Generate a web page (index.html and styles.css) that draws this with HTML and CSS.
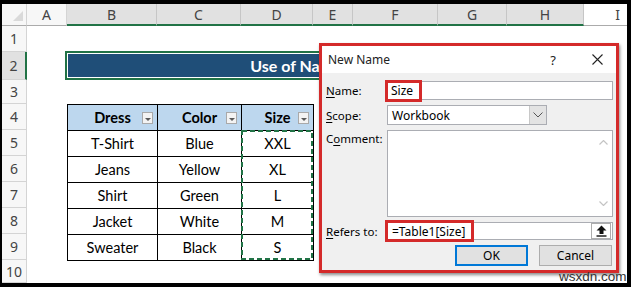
FILE: index.html
```html
<!DOCTYPE html>
<html>
<head>
<meta charset="utf-8">
<link rel="stylesheet" href="styles.css">
</head>
<body>
<div class="frame">
  <div class="sheet">
    <div class="corner"></div>
    <div class="ch">A</div>
    <div class="ch sel">B</div>
    <div class="ch sel">C</div>
    <div class="ch sel">D</div>
    <div class="ch sel">E</div>
    <div class="ch sel">F</div>
    <div class="ch sel">G</div>
    <div class="ch sel">H</div>
    <div class="ch last">I</div>

    <div class="rh">1</div>
    <div class="rh sel">2</div>
    <div class="rh">3</div>
    <div class="rh">4</div>
    <div class="rh">5</div>
    <div class="rh">6</div>
    <div class="rh">7</div>
    <div class="rh">8</div>
    <div class="rh">9</div>
    <div class="rh">10</div>

    <div class="title"><span class="title-txt">Use of Named Range</span></div>

    <table class="tbl">
      <colgroup><col class="c1"><col class="c2"><col class="c3"></colgroup>
      <tr>
        <th><div class="hcell"><span class="htxt">Dress</span><span class="dd"></span></div></th>
        <th><div class="hcell"><span class="htxt">Color</span><span class="dd"></span></div></th>
        <th><div class="hcell"><span class="htxt">Size</span><span class="dd"></span></div></th>
      </tr>
      <tr><td>T-Shirt</td><td>Blue</td><td>XXL</td></tr>
      <tr><td>Jeans</td><td>Yellow</td><td>XL</td></tr>
      <tr><td>Shirt</td><td>Green</td><td>L</td></tr>
      <tr><td>Jacket</td><td>White</td><td>M</td></tr>
      <tr><td>Sweater</td><td>Black</td><td>S</td></tr>
    </table>

    <div class="ants">
      <svg width="72" height="130" viewBox="0 0 72 130"><rect x="1" y="1" width="70" height="128" fill="none" stroke="#217346" stroke-width="2" stroke-dasharray="5 3"/></svg>
    </div>

    <div class="dlg">
      <div class="dlg-title">
        <span class="dlg-name">New Name</span>
        <span class="dlg-help">?</span>
        <span class="dlg-close">
          <svg width="11" height="11" viewBox="0 0 11 11"><path d="M0.5 0.5 L10.5 10.5 M10.5 0.5 L0.5 10.5" stroke="#222" stroke-width="1.1" fill="none"/></svg>
        </span>
      </div>
      <div class="dlg-body">
        <div class="lbl"><span><u>N</u>ame:</span></div>
        <div class="field name-field"><span class="mark">Size</span></div>

        <div class="lbl"><span><u>S</u>cope:</span></div>
        <div class="select">
          <span class="sel-txt">Workbook</span>
          <span class="sel-btn"><svg width="10" height="6" viewBox="0 0 10 6"><path d="M0.5 0.5 L5 5 L9.5 0.5" stroke="#555" stroke-width="1" fill="none"/></svg></span>
        </div>

        <div class="lbl lbl-top"><span>C<u>o</u>mment:</span></div>
        <div class="textarea">
          <div class="ta-space"></div>
          <div class="ta-scroll">
            <svg width="9" height="5" viewBox="0 0 9 5"><path d="M0.5 4.5 L4.5 0.5 L8.5 4.5" stroke="#c4c4c4" stroke-width="1.2" fill="none"/></svg>
            <svg width="9" height="5" viewBox="0 0 9 5"><path d="M0.5 0.5 L4.5 4.5 L8.5 0.5" stroke="#c4c4c4" stroke-width="1.2" fill="none"/></svg>
          </div>
        </div>

        <div class="lbl"><span><u>R</u>efers to:</span></div>
        <div class="field refers-field">
          <span class="mark mark-wide">=Table1[Size]</span>
          <span class="grow"></span>
          <span class="up-btn"><svg width="11" height="12" viewBox="0 0 11 12"><path d="M5.5 0.5 L10.5 5.5 L7.5 5.5 L7.5 9 L3.5 9 L3.5 5.5 L0.5 5.5 Z" fill="#111"/><rect x="0.5" y="10.3" width="10" height="1.4" fill="#111"/></svg></span>
        </div>

        <div class="buttons">
          <div class="btn btn-default">OK</div>
          <div class="btn">Cancel</div>
        </div>
      </div>
    </div>

    <div class="wm">wsxdn.com</div>
  </div>
</div>
</body>
</html>
```

FILE: styles.css
```css
* { box-sizing: border-box; }
html, body { margin: 0; padding: 0; background: #000; }

.frame {
  width: 631px;
  height: 287px;
  background: #000;
  padding: 4px 4px 4px 2px;
}

.sheet {
  position: relative;
  width: 625px;
  height: 279px;
  background: #fff;
  overflow: hidden;
  display: grid;
  grid-template-columns: 25px 40px 90px 84px 72px 40px 85px 69px 77px 1fr;
  grid-template-rows: 22px 26px 28px 24px repeat(6, 26px) 1fr;
  font-family: Lato, "Liberation Sans", sans-serif;
}

.corner {
  position: relative;
  background: #f7f7f7;
  border-right: 1px solid #d4d4d4;
  border-bottom: 1px solid #ababab;
}
.corner::after {
  content: "";
  position: absolute;
  right: 3px;
  bottom: 4px;
  width: 10px;
  height: 10px;
  background: #dadada;
  clip-path: polygon(100% 0, 100% 100%, 0 100%);
}

.ch {
  display: flex;
  align-items: center;
  justify-content: center;
  background: #f7f7f7;
  border-right: 1px solid #d4d4d4;
  border-bottom: 1px solid #ababab;
  font: 14px "Noto Sans", sans-serif;
  color: #444;
}
.ch.sel {
  background: #e1e1e1;
  border-right-color: #c6c6c6;
  border-bottom: 2px solid #217346;
}
.ch.last { background: #fff; border-right: none; justify-content: flex-end; padding-right: 7px; }

.rh {
  grid-column: 1;
  display: flex;
  align-items: center;
  justify-content: center;
  background: #f7f7f7;
  border-right: 1px solid #d4d4d4;
  border-bottom: 1px solid #d4d4d4;
  font: 14px "Noto Sans", sans-serif;
  color: #444;
}
.rh.sel {
  background: #e1e1e1;
  border-right: 2px solid #217346;
}

.title {
  grid-column: 3 / 10;
  grid-row: 3;
  margin: -1px 0 0 -2px;
  border: 2px solid #217346;
  box-shadow: inset 0 0 0 1px #fff;
  background: #1f4e78;
  color: #fff;
  font-weight: bold;
  font-size: 16px;
  display: flex;
  align-items: center;
  justify-content: center;
}

.tbl {
  grid-column: 3 / 6;
  grid-row: 5 / 11;
  border-collapse: collapse;
  table-layout: fixed;
  width: 246px;
  height: 156px;
}
.tbl .c1 { width: 90px; }
.tbl .c2 { width: 84px; }
.tbl .c3 { width: 72px; }
.tbl th, .tbl td {
  border: 1px solid #000;
  padding: 0;
  height: 26px;
  text-align: center;
  font-size: 14.5px;
  color: #000;
}
.tbl th { background: #bdd7ee; font-weight: bold; }

.hcell {
  display: grid;
  grid-template-columns: 1fr auto 1fr;
  align-items: center;
}
.htxt { grid-column: 2; }
.dd {
  grid-column: 3;
  justify-self: end;
  margin-right: 4px;
  width: 11px;
  height: 12px;
  background: #f3f3f3;
  border: 1px solid #a9a9a9;
  position: relative;
}
.dd::after {
  content: "";
  position: absolute;
  left: 2px;
  top: 5px;
  border-left: 3px solid transparent;
  border-right: 3px solid transparent;
  border-top: 3px solid #595959;
}

.ants {
  grid-column: 5;
  grid-row: 6 / 11;
  z-index: 1;
  line-height: 0;
}

.dlg {
  position: absolute;
  left: 317px;
  top: 39px;
  width: 300px;
  height: 230px;
  border: 3px solid #d42a2a;
  background: #f0f0f0;
  box-shadow: 1px 2px 3px rgba(0,0,0,0.45);
  z-index: 2;
  font: 11.5px "Noto Sans", sans-serif;
  color: #000;
  display: flex;
  flex-direction: column;
}
.dlg-title {
  height: 27px;
  background: #fff;
  display: flex;
  align-items: center;
  padding-left: 6px;
  color: #222;
}
.dlg-name { flex: 1; font-size: 12px; }
.dlg-help { width: 12px; text-align: center; font-size: 13px; margin-right: 33px; }
.dlg-close { width: 11px; height: 11px; margin-right: 13px; line-height: 0; }

.dlg-body {
  flex: 1;
  padding: 8px 3px 0 4px;
  display: grid;
  grid-template-columns: 61px 1fr;
  grid-template-rows: 19px 20px 87px 18px 21px;
  row-gap: 5px;
}
.lbl { display: flex; align-items: center; white-space: nowrap; }
.lbl-top { align-items: flex-start; padding-top: 1px; }
.lbl u { text-decoration-thickness: 1px; text-underline-offset: 2px; }

.field {
  background: #fff;
  border: 1px solid #abadb3;
  display: flex;
  align-items: center;
}
.mark {
  height: 22px;
  margin-left: -3px;
  border: 3px solid #d42a2a;
  padding: 0 6px 0 3px;
  display: flex;
  align-items: center;
  background: #fff;
  flex: none;
  font-size: 12px;
}
.mark-wide { padding: 0 6px 0 4px; }
.grow { flex: 1; }
.up-btn {
  width: 20px;
  height: 16px;
  margin-right: 1px;
  border: 1px solid #adadad;
  background: #fff;
  display: flex;
  align-items: center;
  justify-content: center;
}

.select {
  width: 160px;
  background: #fff;
  border: 1px solid #abadb3;
  display: flex;
  align-items: stretch;
}
.sel-txt { flex: 1; display: flex; align-items: center; padding-left: 4px; font-size: 12px; }
.sel-btn {
  width: 17px;
  background: #e3e3e3;
  border-left: 1px solid #c8c8c8;
  display: flex;
  align-items: center;
  justify-content: center;
}

.textarea {
  background: #fff;
  border: 1px solid #abadb3;
  display: flex;
}
.ta-space { flex: 1; }
.ta-scroll {
  width: 17px;
  display: flex;
  flex-direction: column;
  justify-content: space-between;
  align-items: center;
  padding: 9px 0 10px;
}

.buttons {
  grid-column: 1 / 3;
  display: flex;
  justify-content: flex-end;
  gap: 11px;
  padding-right: 1px;
  font-size: 12px;
}
.btn {
  width: 73px;
  height: 21px;
  background: #e1e1e1;
  border: 1px solid #adadad;
  display: flex;
  align-items: center;
  justify-content: center;
}
.btn-default { border: 2px solid #0078d7; }

.wm {
  position: absolute;
  left: 557px;
  top: 267px;
  font: 13.5px "Liberation Sans", sans-serif;
  line-height: 12px;
  color: #333;
  z-index: 3;
}
```
